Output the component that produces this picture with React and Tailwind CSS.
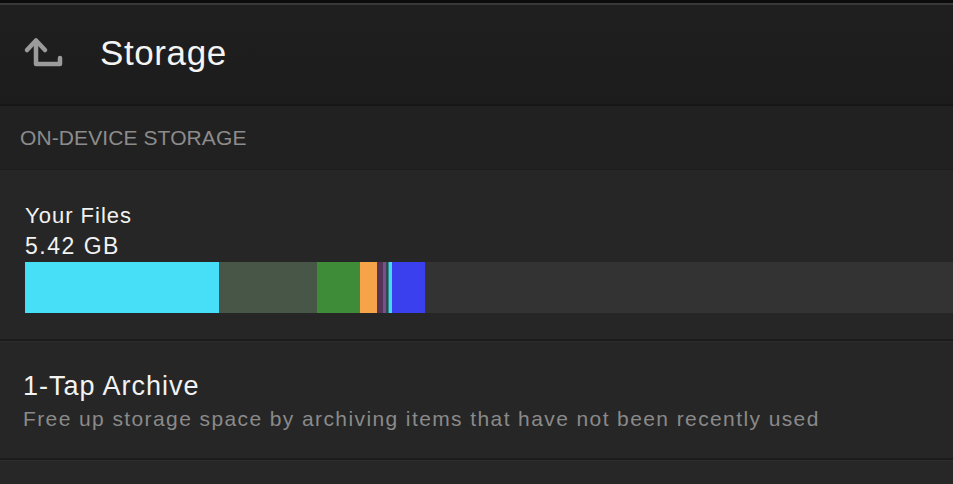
import { useMemo } from "react";

const segments = [
  { w: 194, color: "#47dff8" },
  { w: 98, color: "#475647" },
  { w: 43, color: "#3f8c38" },
  { w: 17, color: "#f7a34a" },
  { w: 6, color: "#563457" },
  { w: 3, color: "#7c4f8c" },
  { w: 2, color: "#2f4a4a" },
  { w: 1, color: "#2c8f8f" },
  { w: 3, color: "#48d8f5" },
  { w: 33, color: "#3b40ee" },
];

const BackIcon = () => (
  <svg width="44" height="36" viewBox="0 0 44 36" fill="none">
    <path
      d="M14 6 V29 H38 V23"
      stroke="#9b9b9b"
      strokeWidth="4.5"
      strokeLinecap="round"
      strokeLinejoin="round"
    />
    <path
      d="M5 15 L14 5.5 L23 15"
      stroke="#9b9b9b"
      strokeWidth="4.5"
      strokeLinecap="round"
      strokeLinejoin="round"
    />
  </svg>
);

const App = () => {
  const bar = useMemo(() => segments, []);

  return (
    <div
      className="w-[953px] h-[484px] overflow-hidden bg-[#262626] text-[#f2f2f2] flex flex-col"
      style={{ fontFamily: '"Liberation Sans", Arial, sans-serif' }}
    >
      {/* Top strip */}
      <div className="h-[3px] bg-[#0c0c0c]" />
      <div className="h-[2px] bg-[#383838]" />

      {/* Header */}
      <header className="h-[101px] flex items-center bg-gradient-to-b from-[#1f1f1f] to-[#1c1c1c] border-b-2 border-[#161616]">
        <div className="ml-[22px] w-[44px] flex items-center -mt-[4px]">
          <BackIcon />
        </div>
        <h1 className="ml-[34px] text-[35px] text-[#f4f4f4] tracking-[0.6px] -mt-[2px]">
          Storage
        </h1>
      </header>

      {/* Section label */}
      <div className="h-[64px] flex items-center bg-[#212121] border-b border-[#1d1d1d]">
        <span className="ml-[20px] text-[21px] text-[#8c8c8c] tracking-[0.1px]">
          ON-DEVICE STORAGE
        </span>
      </div>

      {/* Your Files */}
      <div className="h-[169px] flex flex-col bg-[#262626]">
        <div className="pl-[25px] pt-[31px] leading-[30px]">
          <div className="text-[22px] tracking-[1px]">Your Files</div>
          <div className="text-[23px] tracking-[1.5px]">5.42 GB</div>
        </div>
        <div className="mt-[1px] ml-[25px] h-[51px] flex bg-[#333333]">
          {bar.map((s, i) => (
            <div
              key={i}
              className="h-full shrink-0"
              style={{ width: s.w, backgroundColor: s.color }}
            />
          ))}
        </div>
      </div>

      {/* Divider */}
      <div className="h-[2px] bg-[#1b1b1b]" />
      <div className="h-[1px] bg-[#2d2d2d]" />

      {/* 1-Tap Archive */}
      <div className="h-[116px] flex flex-col justify-center pl-[23px] bg-[#262626]">
        <div className="text-[27px] leading-[34px] tracking-[1px] mt-[2px]">1-Tap Archive</div>
        <div className="text-[21px] leading-[31px] tracking-[1.4px] text-[#8a8a8a]">
          Free up storage space by archiving items that have not been recently used
        </div>
      </div>

      {/* Divider */}
      <div className="h-[2px] bg-[#1b1b1b]" />
      <div className="h-[1px] bg-[#2d2d2d]" />
      <div className="flex-1 bg-[#272727]" />
    </div>
  );
};

export default App;
